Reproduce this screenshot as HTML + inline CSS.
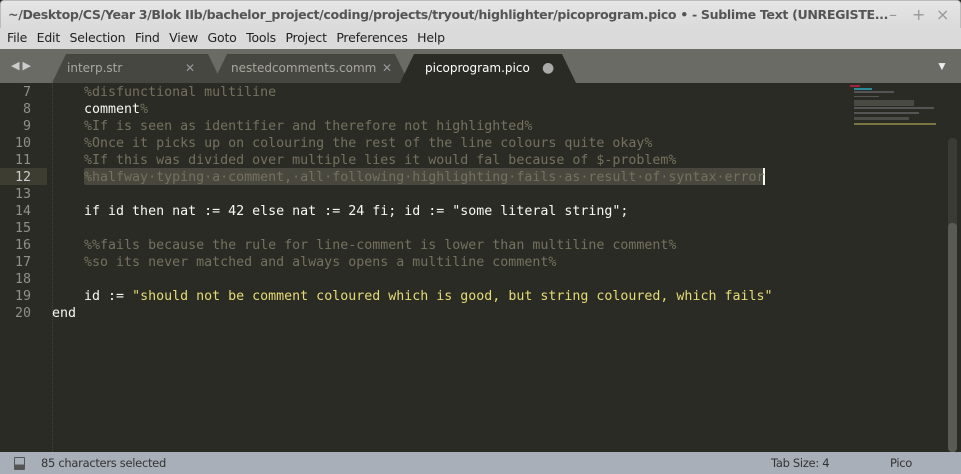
<!DOCTYPE html>
<html><head><meta charset="utf-8"><style>
*{margin:0;padding:0;box-sizing:border-box}
body{width:961px;height:474px;overflow:hidden;background:#272822;font-family:"Liberation Sans",sans-serif;position:relative}
#title{position:absolute;left:0;top:0;width:961px;height:28px;background:linear-gradient(#e6e6e6,#dadada);border:1px solid #bbb;border-bottom:none;border-radius:4px 4px 0 0;font-family:"DejaVu Sans",sans-serif;font-weight:bold;font-size:12.6px;color:#555;line-height:28px;padding-left:7px;white-space:nowrap;letter-spacing:-0.35px}
#title .b{position:absolute;top:0;color:#999;font-weight:normal;font-size:16px}
#menu{position:absolute;left:0;top:28px;width:961px;height:21px;background:#dadada;font-family:"DejaVu Sans",sans-serif;font-size:12.5px;color:#222;line-height:19px;padding-left:7px;letter-spacing:-0.2px}
#menu span{margin-right:9.5px}
#tabs{position:absolute;left:0;top:49px;width:961px;height:34px;background:#6b6b66}
.tab{position:absolute;top:5px;height:29px;background:#474742;font-family:"DejaVu Sans",sans-serif;font-size:12px;color:#a8a8a0;line-height:29px;clip-path:polygon(0 100%,14px 0,calc(100% - 14px) 0,100% 100%)}
.tab .x{position:absolute;top:0;color:#999;font-size:12px}
#editor{position:absolute;left:0;top:83px;width:961px;height:369px;background:#2a2b25}
.ln{position:absolute;left:0;width:31px;text-align:right;font-family:"DejaVu Sans Mono",monospace;font-size:13.3px;color:#8f908a;height:17px;line-height:19px}
.cd{position:absolute;left:52px;font-family:"DejaVu Sans Mono",monospace;font-size:13.3px;color:#f8f8f2;white-space:pre;height:17px;line-height:19px}
.c{color:#75715e}.s{color:#e6db74}
#status{position:absolute;left:0;top:452px;width:961px;height:22px;background:#a9afb8;font-family:"DejaVu Sans",sans-serif;font-size:11.5px;color:#333;line-height:22px;letter-spacing:-0.3px}
</style></head><body>
<div id="title">~/Desktop/CS/Year 3/Blok IIb/bachelor_project/coding/projects/tryout/highlighter/picoprogram.pico • - Sublime Text (UNREGISTE...
<span class="b" style="left:888px">–</span><span class="b" style="left:911px">+</span><span class="b" style="left:935px">×</span></div>
<div id="menu"><span>File</span><span>Edit</span><span>Selection</span><span>Find</span><span>View</span><span>Goto</span><span>Tools</span><span>Project</span><span>Preferences</span><span>Help</span></div>
<div id="tabs">
<div style="position:absolute;left:11px;top:10px;color:#ccc;font-size:11px">◀ ▶</div>
<div class="tab" style="left:52px;width:170px"><span style="position:absolute;left:15px">interp.str</span><span class="x" style="left:133px">✕</span></div>
<div class="tab" style="left:213px;width:196px"><span style="position:absolute;left:18px">nestedcomments.comm</span><span class="x" style="left:169px">✕</span></div>
<div class="tab" style="left:400px;width:176px;background:#2a2b25;color:#fff"><span style="position:absolute;left:25px">picoprogram.pico</span><span style="position:absolute;left:142px;color:#aaa;font-size:14px">●</span></div>
<div style="position:absolute;left:936px;top:10px;color:#eee;font-size:12px">▼</div>
</div>
<div id="editor">
<div style="position:absolute;left:0;top:85px;width:47px;height:17px;background:#3e3d32"></div>
<div style="position:absolute;left:84px;top:85px;width:680px;height:17px;background:#49483e;border-radius:2px"></div>
<div style="position:absolute;left:763px;top:85px;width:2px;height:17px;background:#f8f8f0"></div>
<div style="position:absolute;left:52px;top:0;height:369px;border-left:1px dotted #444"></div>
<div style="position:absolute;left:948px;top:55px;width:9px;height:314px;background:#3a3b35;border-radius:4px"></div>
<div style="position:absolute;left:948px;top:140px;width:9px;height:229px;background:#5a5a55;border-radius:4px"></div>
<div style="position:absolute;left:850px;top:2px;width:10px;height:2px;background:#a02040"></div>
<div style="position:absolute;left:854px;top:5px;width:18px;height:2px;background:#2a8a9a"></div>
<div style="position:absolute;left:854px;top:8px;width:40px;height:2px;background:#555"></div>
<div style="position:absolute;left:854px;top:13px;width:25px;height:1px;background:#555"></div>
<div style="position:absolute;left:854px;top:17px;width:60px;height:6px;background:#4a4a44"></div>
<div style="position:absolute;left:854px;top:24px;width:80px;height:2px;background:#555"></div>
<div style="position:absolute;left:854px;top:29px;width:65px;height:2px;background:#555"></div>
<div style="position:absolute;left:854px;top:34px;width:55px;height:3px;background:#4d4d47"></div>
<div style="position:absolute;left:854px;top:40px;width:82px;height:2px;background:#7a7540"></div>
<div class="ln" style="top:0">7</div><div class="cd c" style="top:0">    %disfunctional multiline</div>
<div class="ln" style="top:17px">8</div><div class="cd" style="top:17px">    comment<span class="c">%</span></div>
<div class="ln" style="top:34px">9</div><div class="cd c" style="top:34px">    %If is seen as identifier and therefore not highlighted%</div>
<div class="ln" style="top:51px">10</div><div class="cd c" style="top:51px">    %Once it picks up on colouring the rest of the line colours quite okay%</div>
<div class="ln" style="top:68px">11</div><div class="cd c" style="top:68px">    %If this was divided over multiple lies it would fal because of $-problem%</div>
<div class="ln" style="top:85px;color:#ccc">12</div><div class="cd c" style="top:85px">    %halfway·typing·a·comment,·all·following·highlighting·fails·as·result·of·syntax·error</div>
<div class="ln" style="top:102px">13</div>
<div class="ln" style="top:119px">14</div><div class="cd" style="top:119px">    if id then nat := 42 else nat := 24 fi; id := "some literal string";</div>
<div class="ln" style="top:136px">15</div>
<div class="ln" style="top:153px">16</div><div class="cd c" style="top:153px">    %%fails because the rule for line-comment is lower than multiline comment%</div>
<div class="ln" style="top:170px">17</div><div class="cd c" style="top:170px">    %so its never matched and always opens a multiline comment%</div>
<div class="ln" style="top:187px">18</div>
<div class="ln" style="top:204px">19</div><div class="cd" style="top:204px">    id := <span class="s">"should not be comment coloured which is good, but string coloured, which fails"</span></div>
<div class="ln" style="top:221px">20</div><div class="cd" style="top:221px">end</div>
</div>
<div id="status">
<div style="position:absolute;left:14px;top:5px;width:11px;height:13px;border:1px solid #555;border-radius:1px;background:linear-gradient(#a9afb8 60%,#555 60%)"></div>
<span style="position:absolute;left:41px">85 characters selected</span>
<span style="position:absolute;left:771px">Tab Size: 4</span>
<span style="position:absolute;left:890px">Pico</span>
</div>
</body></html>
